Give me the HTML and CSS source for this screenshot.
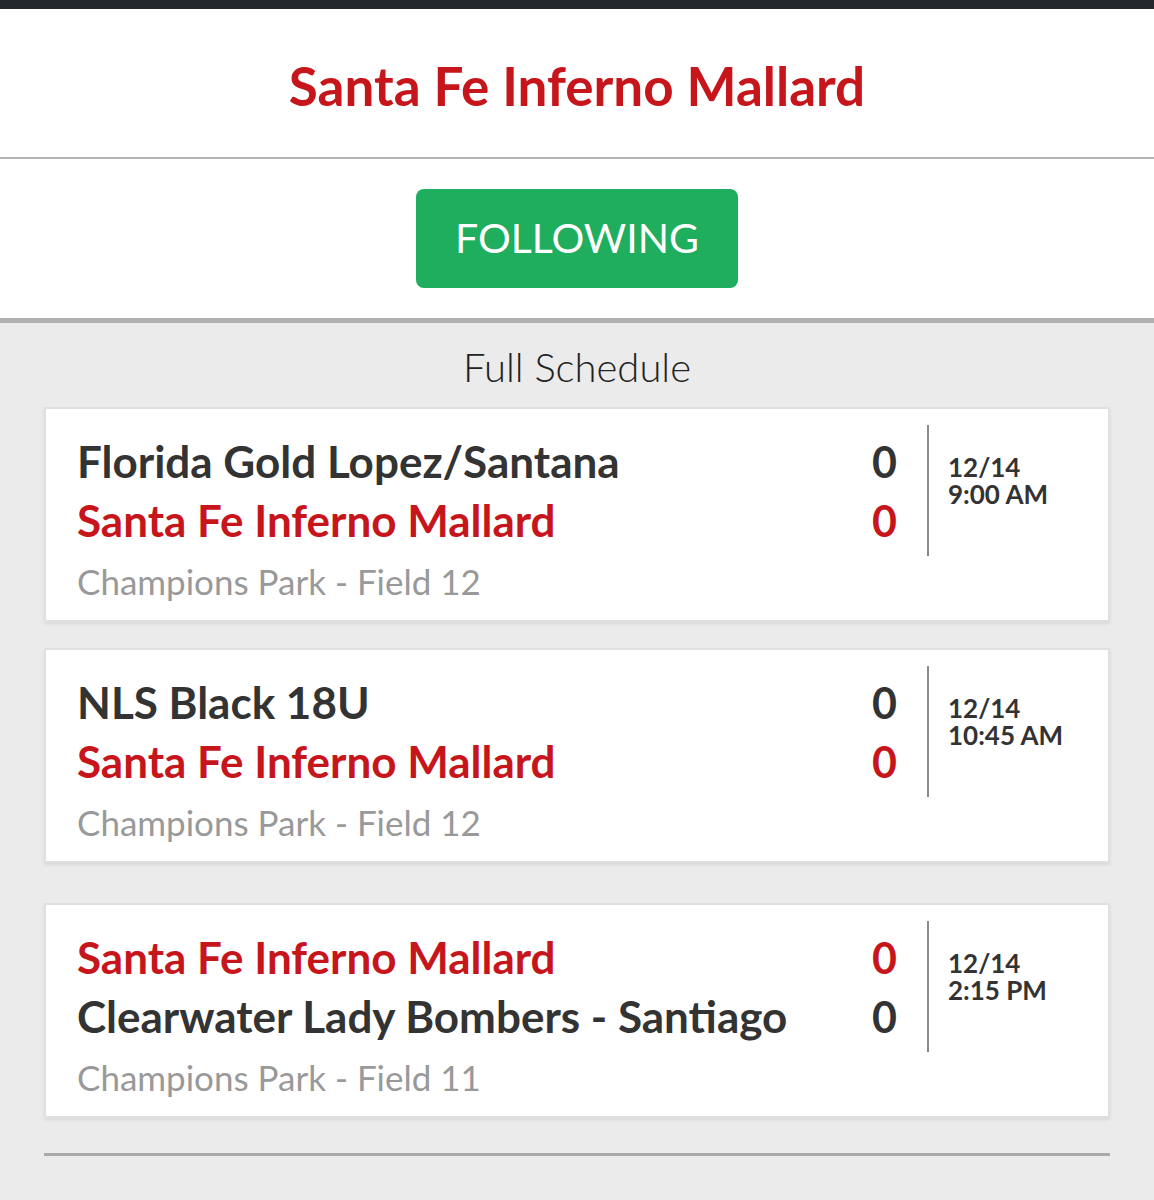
FILE: index.html
```html
<!DOCTYPE html>
<html>
<head>
<meta charset="utf-8">
<link rel="stylesheet" href="styles.css">
</head>
<body>
<div class="topbar"></div>
<header class="header">
  <h1 class="title">Santa Fe Inferno Mallard</h1>
</header>
<div class="follow-area">
  <button class="follow-btn">FOLLOWING</button>
</div>
<main class="schedule">
  <h2 class="schedule-title">Full Schedule</h2>

  <div class="card">
    <div class="teams">
      <div class="team">Florida Gold Lopez/Santana</div>
      <div class="team mine">Santa Fe Inferno Mallard</div>
      <div class="location">Champions Park - Field 12</div>
    </div>
    <div class="scores">
      <div class="score">0</div>
      <div class="score mine">0</div>
    </div>
    <div class="vline"></div>
    <div class="when">
      <div>12/14</div>
      <div>9:00 AM</div>
    </div>
  </div>

  <div class="card">
    <div class="teams">
      <div class="team">NLS Black 18U</div>
      <div class="team mine">Santa Fe Inferno Mallard</div>
      <div class="location">Champions Park - Field 12</div>
    </div>
    <div class="scores">
      <div class="score">0</div>
      <div class="score mine">0</div>
    </div>
    <div class="vline"></div>
    <div class="when">
      <div>12/14</div>
      <div>10:45 AM</div>
    </div>
  </div>

  <div class="card card-last">
    <div class="teams">
      <div class="team mine">Santa Fe Inferno Mallard</div>
      <div class="team">Clearwater Lady Bombers - Santiago</div>
      <div class="location">Champions Park - Field 11</div>
    </div>
    <div class="scores">
      <div class="score mine">0</div>
      <div class="score">0</div>
    </div>
    <div class="vline"></div>
    <div class="when">
      <div>12/14</div>
      <div>2:15 PM</div>
    </div>
  </div>

  <div class="end-rule"></div>
</main>
</body>
</html>
```
FILE: styles.css
```css
html, body {
  margin: 0;
  padding: 0;
}
body {
  font-family: Lato, "Open Sans", "Liberation Sans", sans-serif;
  background: #ebebeb;
  color: #333333;
}
.topbar {
  height: 9px;
  background: #24282c;
}
.header {
  height: 150px;
  box-sizing: border-box;
  padding-top: 5px;
  background: #ffffff;
  display: flex;
  align-items: center;
  justify-content: center;
  border-bottom: 2px solid #b4b4b4;
}
.title {
  margin: 0;
  font-size: 53px;
  font-weight: 700;
  line-height: 60px;
  color: #c6161c;
}
.follow-area {
  height: 159px;
  background: #ffffff;
  display: flex;
  align-items: center;
  justify-content: center;
  border-bottom: 5px solid #b0b0b0;
}
.follow-btn {
  width: 322px;
  height: 99px;
  border: none;
  border-radius: 8px;
  background: #1eae5d;
  color: #ffffff;
  font-family: inherit;
  font-size: 41px;
  font-weight: 400;
  padding: 0;
  padding-bottom: 2px;
}
.schedule {
  padding: 0 44px 60px;
}
.schedule-title {
  margin: 0;
  padding-top: 4px;
  line-height: 80px;
  font-size: 40px;
  font-weight: 300;
  text-align: center;
  color: #222222;
}
.card {
  display: flex;
  align-items: flex-start;
  background: #ffffff;
  border: 2px solid #e0e0e0;
  box-shadow: 0 2px 3px rgba(0, 0, 0, 0.08);
  padding: 23px 0 8px 31px;
  margin-bottom: 26px;
}
.card-last {
  margin-top: 40px;
  margin-bottom: 35px;
}
.teams {
  flex: 1;
}
.team {
  font-size: 44px;
  font-weight: 700;
  line-height: 59px;
  color: #333333;
  white-space: nowrap;
}
.mine {
  color: #c6161c;
}
.location {
  font-size: 35px;
  font-weight: 400;
  line-height: 62px;
  color: #999999;
}
.scores {
  text-align: right;
}
.score {
  font-size: 43px;
  font-weight: 700;
  line-height: 59px;
  color: #333333;
}
.score.mine {
  color: #c6161c;
}
.vline {
  width: 2px;
  height: 131px;
  margin-top: -7px;
  margin-left: 30px;
  background: #8a8a8a;
}
.when {
  width: 160px;
  padding-left: 19px;
  margin-top: 22px;
  font-size: 26px;
  font-weight: 700;
  line-height: 27px;
  color: #333333;
}
.end-rule {
  height: 3px;
  background: #aaaaaa;
}
```
